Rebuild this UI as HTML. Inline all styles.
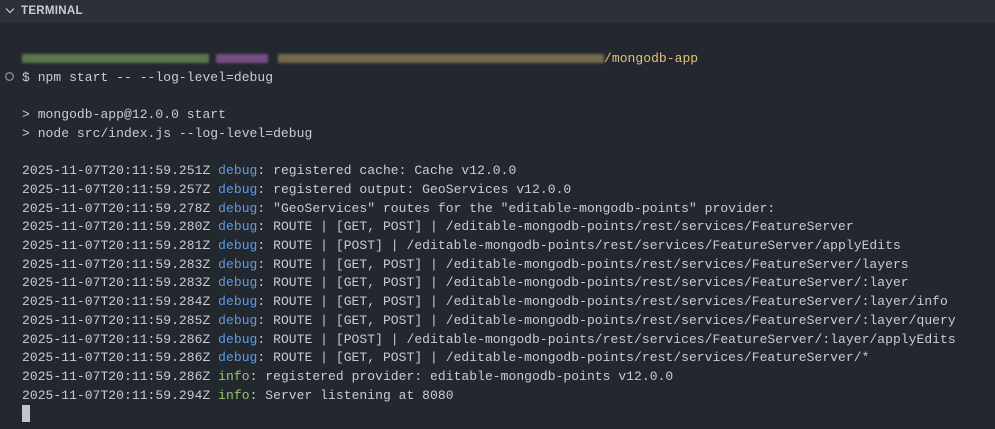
<!DOCTYPE html>
<html><head><style>
html,body{margin:0;padding:0;width:995px;height:429px;overflow:hidden;background:#23272e;}
.hdr{position:absolute;left:0;top:0;width:995px;height:23px;background:#2c3038;color:#c8ccd4;font:bold 11.5px "Liberation Sans",sans-serif;}
.hdr span{position:absolute;left:21px;top:5px;letter-spacing:0.3px}
.term{position:absolute;left:22px;top:50px;font:13px/18.7px "Liberation Mono",monospace;letter-spacing:0.045px;color:#c8ccd4;white-space:pre;}
.d{color:#5c9ee6}.i{color:#98c379}.y{color:#e5c07b}
.blur{display:inline-block;height:9px;vertical-align:middle;filter:blur(1.2px);opacity:.8}
.cur{display:inline-block;width:8px;height:17px;background:#c0c4cc;vertical-align:top}
</style></head><body>
<div class="hdr"><svg style="position:absolute;left:5px;top:7px" width="10" height="8" viewBox="0 0 10 8"><path d="M1 1.5L5 5.5L9 1.5" stroke="#c8ccd4" stroke-width="1.2" fill="none"/></svg><span>TERMINAL</span></div>
<svg style="position:absolute;left:4px;top:71px" width="11" height="11"><circle cx="5.5" cy="5.5" r="3.8" stroke="#8a8f98" stroke-width="1.3" fill="none"/></svg>
<div class="term"><span class="blur" style="width:187px;background:#6a8a55"></span><span class="blur" style="width:7px"></span><span class="blur" style="width:52px;background:#8a5a9a"></span><span class="blur" style="width:10px"></span><span class="blur" style="width:326px;background:#8a7a55"></span><span class="y">/mongodb-app</span>
$ npm start -- --log-level=debug

&gt; mongodb-app@12.0.0 start
&gt; node src/index.js --log-level=debug

2025-11-07T20:11:59.251Z <span class="d">debug</span>: registered cache: Cache v12.0.0
2025-11-07T20:11:59.257Z <span class="d">debug</span>: registered output: GeoServices v12.0.0
2025-11-07T20:11:59.278Z <span class="d">debug</span>: "GeoServices" routes for the "editable-mongodb-points" provider:
2025-11-07T20:11:59.280Z <span class="d">debug</span>: ROUTE | [GET, POST] | /editable-mongodb-points/rest/services/FeatureServer
2025-11-07T20:11:59.281Z <span class="d">debug</span>: ROUTE | [POST] | /editable-mongodb-points/rest/services/FeatureServer/applyEdits
2025-11-07T20:11:59.283Z <span class="d">debug</span>: ROUTE | [GET, POST] | /editable-mongodb-points/rest/services/FeatureServer/layers
2025-11-07T20:11:59.283Z <span class="d">debug</span>: ROUTE | [GET, POST] | /editable-mongodb-points/rest/services/FeatureServer/:layer
2025-11-07T20:11:59.284Z <span class="d">debug</span>: ROUTE | [GET, POST] | /editable-mongodb-points/rest/services/FeatureServer/:layer/info
2025-11-07T20:11:59.285Z <span class="d">debug</span>: ROUTE | [GET, POST] | /editable-mongodb-points/rest/services/FeatureServer/:layer/query
2025-11-07T20:11:59.286Z <span class="d">debug</span>: ROUTE | [POST] | /editable-mongodb-points/rest/services/FeatureServer/:layer/applyEdits
2025-11-07T20:11:59.286Z <span class="d">debug</span>: ROUTE | [GET, POST] | /editable-mongodb-points/rest/services/FeatureServer/*
2025-11-07T20:11:59.286Z <span class="i">info</span>: registered provider: editable-mongodb-points v12.0.0
2025-11-07T20:11:59.294Z <span class="i">info</span>: Server listening at 8080
<span class="cur"></span></div>
</body></html>
